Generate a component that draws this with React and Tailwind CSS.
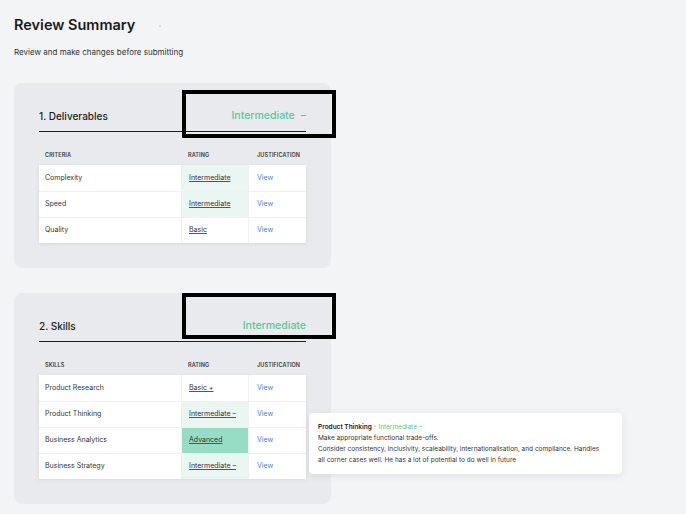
import React from "react";

const deliverables = [
  { name: "Complexity", rating: "Intermediate", tone: "light" },
  { name: "Speed", rating: "Intermediate", tone: "light" },
  { name: "Quality", rating: "Basic", tone: "none" },
];

const skills = [
  { name: "Product Research", rating: "Basic +", tone: "none" },
  { name: "Product Thinking", rating: "Intermediate –", tone: "light" },
  { name: "Business Analytics", rating: "Advanced", tone: "strong" },
  { name: "Business Strategy", rating: "Intermediate –", tone: "light" },
];

function Table({ label, rows }) {
  return (
    <div>
      <div className="mt-[17px] mb-[4px] flex h-[12px] items-center text-[5.5px] font-semibold uppercase tracking-[0.02em] text-[#3a3a3a]">
        <div className="w-[142px] pl-[6px]">{label}</div>
        <div className="w-[68px] pl-[7px]">Rating</div>
        <div className="w-[56px] pl-[8px]">Justification</div>
      </div>
      <div className="bg-white shadow-[0_1px_4px_rgba(0,0,0,0.08)]">
        {rows.map((r, i) => (
          <div
            key={r.name}
            className={
              "flex h-[26px] text-[7px] text-[#333] " +
              (i > 0 ? "border-t border-[#f0f0f0]" : "")
            }
          >
            <div className="flex w-[142px] items-center pl-[6px]">{r.name}</div>
            <div
              className={
                "flex w-[68px] items-center border-x border-[#f0f0f0] pl-[7px] " +
                (r.tone === "light"
                  ? "bg-[#eaf6f2]"
                  : r.tone === "strong"
                  ? "bg-[#97dcc4]"
                  : "")
              }
            >
              <span className="underline decoration-[#555] underline-offset-[1px]">{r.rating}</span>
            </div>
            <div className="flex w-[56px] items-center pl-[8px] text-[#4a80e8]">View</div>
          </div>
        ))}
      </div>
    </div>
  );
}

function Card({ title, rating, dash, label, rows, boxClass }) {
  return (
    <div className="relative ml-[14px] w-[317px] rounded-[8px] bg-[#e9eaee] px-[25px] pb-[25px]">
      <div className="flex items-center justify-between border-b border-[#1c1c1c] pt-[26px] pb-[8px] leading-[14px]">
        <span className="text-[10px] font-medium text-[#222]">{title}</span>
        <span className="text-[10.5px] font-medium text-[#55c99a]">
          {rating}
          {dash && <span className="ml-[6px]">–</span>}
        </span>
      </div>
      <Table label={label} rows={rows} />
      <div className={"pointer-events-none absolute border-[4px] border-black " + boxClass} />
    </div>
  );
}

export default function App() {
  return (
    <div className="relative h-[514px] w-[686px] overflow-hidden bg-[#f3f4f6] font-['Inter',sans-serif]">
      <div className="pl-[14px] pt-[14px]">
        <div className="flex items-center">
          <h1 className="text-[14.5px] font-semibold leading-[22px] text-[#1b1b1b]">Review Summary</h1>
          <span className="ml-[24px] mt-[2px] h-[2px] w-[2px] bg-[#dcdcdc]" />
        </div>
        <p className="mt-[11px] text-[8px] leading-[10px] text-[#333]">
          Review and make changes before submitting
        </p>
      </div>
      <div className="mt-[26px]">
        <Card
          title="1. Deliverables"
          rating="Intermediate"
          dash
          label="Criteria"
          rows={deliverables}
          boxClass="left-[168px] top-[7px] h-[48px] w-[154px]"
        />
      </div>
      <div className="mt-[25px]">
        <Card
          title="2. Skills"
          rating="Intermediate"
          label="Skills"
          rows={skills}
          boxClass="left-[168px] top-0 h-[46px] w-[154px]"
        />
      </div>
      <div className="absolute left-[309px] top-[413px] w-[313px] rounded-[4px] bg-white px-[9px] pt-[9px] pb-[8px] text-[6.5px] leading-[11px] text-[#333] shadow-[0_2px_8px_rgba(0,0,0,0.08)]">
        <div>
          <span className="font-semibold text-[#222]">Product Thinking</span>
          <span className="text-[#aaa]"> - </span>
          <span className="text-[#55c99a]">Intermediate –</span>
        </div>
        <div>Make appropriate functional trade-offs.</div>
        <div>
          Consider consistency, inclusivity, scaleability, internationalisation, and compliance. Handles
          <br />
          all corner cases well. He has a lot of potential to do well in future
        </div>
      </div>
    </div>
  );
}
